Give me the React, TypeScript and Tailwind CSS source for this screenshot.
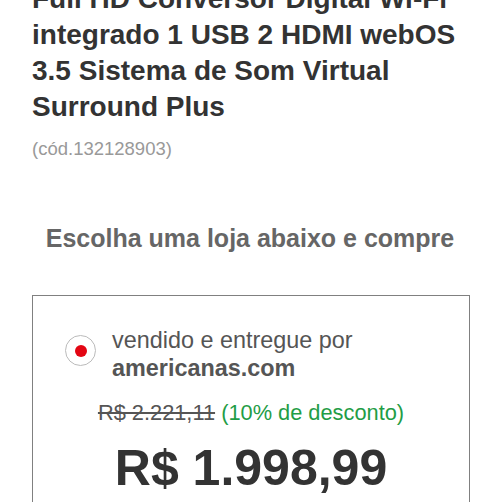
export default function App() {
  return (
    <div className="h-[502px] w-[500px] overflow-hidden bg-white font-['Liberation_Sans',Arial,sans-serif]">
      <div className="px-8">
        <h1 className="mt-[-19px] text-[28px] font-bold leading-[36px] text-[#333]">
          Full HD Conversor Digital Wi-Fi integrado 1 USB 2 HDMI webOS 3.5 Sistema de Som Virtual Surround Plus
        </h1>
        <p className="mt-[14px] text-[18.5px] leading-[20px] text-[#999]">(cód.132128903)</p>
        <h2 className="mt-[65px] text-center text-[25px] font-bold leading-[28px] text-[#666]">
          Escolha uma loja abaixo e compre
        </h2>
        <section className="mt-[43px] w-[438px] border border-[#808080] pb-6">
          <div className="mt-[30px] flex items-start gap-[16px] pl-[32px]">
            <span className="mt-[9px] flex h-[31px] w-[31px] shrink-0 items-center justify-center rounded-full border border-[#bbb] bg-white">
              <span className="h-[12px] w-[12px] rounded-full bg-[#e30613]" />
            </span>
            <div className="text-[23.4px] leading-[28px] text-[#555]">
              <p>vendido e entregue por</p>
              <p className="font-bold">americanas.com</p>
            </div>
          </div>
          <p className="mt-[19px] text-center text-[21.8px] leading-[24px]">
            <span className="text-[#555] line-through">R$ 2.221,11</span>{" "}
            <span className="text-[#1f9d46]">(10% de desconto)</span>
          </p>
          <p className="mt-[15px] text-center text-[50px] font-bold leading-[56px] text-[#333]">R$ 1.998,99</p>
        </section>
      </div>
    </div>
  );
}
